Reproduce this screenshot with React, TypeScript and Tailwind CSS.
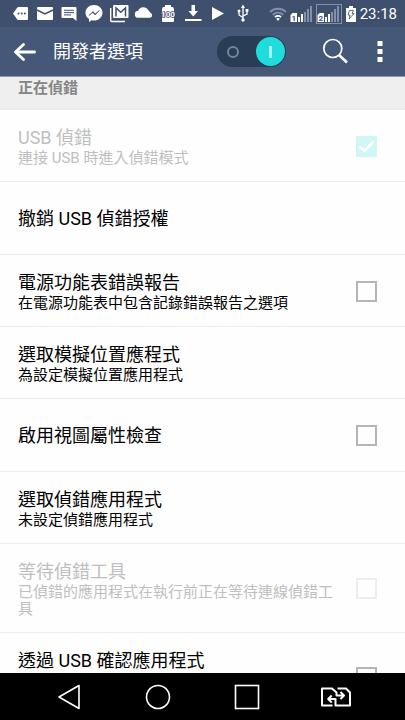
import { useState } from 'react';
import type { ReactNode } from 'react';
import { clsx } from 'clsx';

type Option = {
  id: string;
  title: string;
  summary?: string;
  checkbox?: boolean;
  checked?: boolean;
  disabled?: boolean;
  tall?: boolean;
};

const OPTIONS: Option[] = [
  {
    id: 'usb-debugging',
    title: 'USB 偵錯',
    summary: '連接 USB 時進入偵錯模式',
    checkbox: true,
    checked: true,
    disabled: true
  },
  { id: 'revoke-usb', title: '撤銷 USB 偵錯授權' },
  {
    id: 'bug-report',
    title: '電源功能表錯誤報告',
    summary: '在電源功能表中包含記錄錯誤報告之選項',
    checkbox: true
  },
  { id: 'mock-location', title: '選取模擬位置應程式', summary: '為設定模擬位置應用程式' },
  { id: 'view-attributes', title: '啟用視圖屬性檢查', checkbox: true },
  { id: 'debug-app', title: '選取偵錯應用程式', summary: '未設定偵錯應用程式' },
  {
    id: 'wait-debugger',
    title: '等待偵錯工具',
    summary: '已偵錯的應用程式在執行前正在等待連線偵錯工具',
    checkbox: true,
    disabled: true
  },
  { id: 'verify-usb', title: '透過 USB 確認應用程式', checkbox: true, tall: true }
];

const NotificationIcon = ({ children }: { children: ReactNode }) => (
  <svg viewBox="0 0 20 20" className="size-5 shrink-0 fill-white" aria-hidden="true">
    {children}
  </svg>
);

const SignalBars = () => (
  <>
    <rect x="8" y="12" width="2" height="5" fill="#fff" />
    <rect x="11" y="9" width="2" height="8" fill="#fff" />
    <rect x="14" y="7" width="2" height="10" fill="#8290a8" />
    <rect x="17" y="4" width="2" height="13" fill="#8290a8" />
    <rect x="20" y="1" width="2" height="16" fill="#8290a8" />
  </>
);

const SimCard = ({ slot }: { slot: string }) => (
  <>
    <path d="M.5 10l2-2H7v9H.5z" fill="#fff" />
    <text x="3.800" y="15.500" textAnchor="middle" fontSize="8" fontWeight="700" fill="#3f4f6e">
      {slot}
    </text>
  </>
);

const StatusBar = () => (
  <div className="flex h-[27px] shrink-0 items-center bg-[#3f4f6e] pr-2 pl-[10px] text-white">
    <div className="mr-4 flex flex-1 justify-between">
      <NotificationIcon>
        <path d="M8.500 3H17a1 1 0 011 1v11a1 1 0 01-1 1H8.500a1.500 1.500 0 01-1.200-.6L3 9.500l4.300-5.900A1.500 1.500 0 018.500 3z" />
        <g fill="#3f4f6e">
          <circle cx="8.500" cy="9.500" r="1" />
          <circle cx="11.700" cy="9.500" r="1" />
          <circle cx="14.900" cy="9.500" r="1" />
        </g>
      </NotificationIcon>
      <NotificationIcon>
        <rect x="2" y="3" width="16" height="13" rx="1" />
        <path d="M2 6l8 4 8-4" fill="none" stroke="#3f4f6e" strokeWidth="1.500" />
      </NotificationIcon>
      <NotificationIcon>
        <path d="M3.500 3h13a1 1 0 011 1v13l-3.500-3H3.500a1 1 0 01-1-1V4a1 1 0 011-1z" />
        <path d="M5 6.300h10M5 8.600h10M5 10.900h7" stroke="#3f4f6e" strokeWidth="1" />
      </NotificationIcon>
      <NotificationIcon>
        <path d="M10 1c4.800 0 8.500 3.500 8.500 7.800s-3.700 7.800-8.500 7.800c-.9 0-1.700-.1-2.500-.4L5 18v-3C2.800 13.500 1.500 11.300 1.500 8.800 1.500 4.500 5.200 1 10 1z" />
        <path d="M5 11.500l4-4 2.400 2.400L15.200 6.500l-4 4.500-2.400-2.400z" fill="#3f4f6e" stroke="#3f4f6e" strokeWidth=".6" />
      </NotificationIcon>
      <NotificationIcon>
        <path d="M1.700 4v12.500a1 1 0 001 1H16" fill="none" stroke="#fff" strokeWidth="1.400" />
        <rect x="4" y="1" width="15.500" height="13" rx="1" />
        <path d="M7 12.500V4l4.800 4.300L16.500 4v8.500" fill="none" stroke="#3f4f6e" strokeWidth="1.500" />
      </NotificationIcon>
      <NotificationIcon>
        <path d="M4.500 13.800a3.500 3.500 0 01-.3-7 5.500 5.500 0 0110-.6 3.200 3.200 0 011.800 2.200 2.800 2.800 0 01.2 5.400z" />
      </NotificationIcon>
      <NotificationIcon>
        <path d="M7 1h6v2h2l1 2v12a1 1 0 01-1 1H5a1 1 0 01-1-1V5l1-2h2z" />
        <text x="10" y="13" textAnchor="middle" fontSize="8" fontWeight="700" fill="#fff" stroke="#3f4f6e" strokeWidth="1.600" paintOrder="stroke">
          100
        </text>
      </NotificationIcon>
      <NotificationIcon>
        <path d="M8.500 1h3.500v6h3l-4.750 5.500L5.500 7h3zM2 15h16.500v2H2z" />
      </NotificationIcon>
      <NotificationIcon>
        <path d="M4 3l12 6.500L4 16z" />
      </NotificationIcon>
      <NotificationIcon>
        <path d="M10 16V3M10 13.500L6 11V7M10 12l4-2V7" fill="none" stroke="#fff" strokeWidth="1.300" />
        <path d="M10 .5l2 3.500H8zM12.600 5h2.800v2.800h-2.800z" />
        <circle cx="6" cy="7" r="1.500" />
        <circle cx="10" cy="16" r="1.700" />
      </NotificationIcon>
    </div>

    <div className="flex items-center gap-[3px]">
      <svg viewBox="0 0 18 18" className="size-[18px]" fill="none" strokeWidth="1.800" aria-hidden="true">
        <path d="M1 7a11.500 11.500 0 0116 0M3.700 9.800a7.500 7.500 0 0110.600 0" stroke="#8290a8" />
        <path d="M6 12.200a4.400 4.400 0 016 0" stroke="#fff" />
        <path d="M7.200 13.800a2.800 2.800 0 013.600 0L9 16z" fill="#fff" />
      </svg>
      <svg viewBox="0 0 23 18" className="h-[18px] w-[23px]" aria-hidden="true">
        <SimCard slot="1" />
        <SignalBars />
      </svg>
      <svg viewBox="0 0 26 20" className="h-5 w-[26px]" aria-hidden="true">
        <rect x=".5" y=".5" width="25" height="19" fill="none" stroke="#8290a8" />
        <g transform="translate(1 1)">
          <SimCard slot="2" />
          <SignalBars />
        </g>
      </svg>
      <svg viewBox="0 0 12 18" className="h-[18px] w-3" aria-hidden="true">
        <path d="M4 1h4v2h3v14H1V3h3z" fill="#fff" />
        <path d="M4.500 5.500h4L7 8.500h2L4 14l1-4H3z" fill="none" stroke="#3f4f6e" strokeWidth=".8" />
      </svg>
      <span className="text-[15px] leading-5">23:18</span>
    </div>
  </div>
);

const AppBar = () => {
  const [enabled, setEnabled] = useState(true);

  return (
    <header className="flex h-[50px] shrink-0 items-center border-b border-[#8e99ad] bg-[#465878] pl-3 text-white">
      <button type="button" aria-label="返回" className="mr-4">
        <svg viewBox="0 0 25 20" className="h-5 w-[25px]" fill="none" stroke="#fff" strokeWidth="2.800" strokeLinecap="round" strokeLinejoin="round">
          <path d="M11.500 2.500L3.500 10l8 7.500M3.500 10H22.500" />
        </svg>
      </button>
      <h1 className="flex-1 text-lg leading-6">開發者選項</h1>

      <label className="relative flex h-[31px] w-[69px] items-center rounded-full bg-[#293d54] p-px">
        <input
          type="checkbox"
          role="switch"
          aria-label="開發者選項"
          checked={enabled}
          onChange={(e) => setEnabled(e.target.checked)}
          className="absolute inset-0 size-full appearance-none rounded-full"
        />
        <span className={clsx('flex w-full items-center justify-between', !enabled && 'flex-row-reverse')}>
          <span className="mx-[9px] size-3 rounded-full border-2 border-[#75869a]" />
          <span className="flex size-[29px] items-center justify-center rounded-full bg-[#20dcdc]">
            <span className="h-3 w-[3px] bg-[#a8f3f3]" />
          </span>
        </span>
      </label>

      <button type="button" aria-label="搜尋" className="ml-9">
        <svg viewBox="0 0 27 27" className="size-[27px]" fill="none" stroke="#fff">
          <circle cx="10.800" cy="10.500" r="9" strokeWidth="1.700" />
          <path d="M17 17l8 7.500" strokeWidth="2.600" />
        </svg>
      </button>
      <button type="button" aria-label="更多選項" className="mr-[14px] ml-5 px-1">
        <svg viewBox="0 0 14 22" className="h-[22px] w-[14px]" fill="#fff">
          <path d="M4.500 0h5v5h-5zM4.500 8h5v5h-5zM4.500 16h5v5h-5z" />
        </svg>
      </button>
    </header>
  );
};

const OptionText = ({ option }: { option: Option }) => (
  <span className={clsx('block flex-1', option.tall && 'self-start')}>
    <span className="block text-lg leading-[25px]">{option.title}</span>
    {option.summary && <span className="block text-[15px] leading-[17px]">{option.summary}</span>}
  </span>
);

const OptionRow = ({ option }: { option: Option }) => {
  const rowClass = clsx(
    'flex w-full items-center border-t border-[#ececec] pt-[15px] pr-7 pb-[14px] pl-[18px] text-left',
    option.tall ? 'min-h-[89px]' : !option.summary && 'min-h-[73px]',
    option.disabled ? 'text-[#bfbfbf]' : 'text-black'
  );

  if (!option.checkbox) {
    return (
      <button type="button" className={rowClass}>
        <OptionText option={option} />
      </button>
    );
  }

  return (
    <label htmlFor={option.id} className={rowClass}>
      <OptionText option={option} />
      <span className="relative ml-4 size-[21px] shrink-0">
        <input
          id={option.id}
          type="checkbox"
          defaultChecked={option.checked}
          disabled={option.disabled}
          className="peer block size-full appearance-none border-2 border-[#b5b5b5] checked:border-[#20dcdc] checked:bg-[#20dcdc] disabled:border-[#ededed] disabled:checked:border-[#d0f6f6] disabled:checked:bg-[#d0f6f6]"
        />
        <svg viewBox="0 0 21 21" className="pointer-events-none absolute inset-0 hidden size-full peer-checked:block" fill="none" stroke="#fff" strokeWidth="2.600">
          <path d="M3.500 10.500l5 4.500L17.500 5.500" />
        </svg>
      </span>
    </label>
  );
};

const NavigationBar = () => (
  <nav className="flex h-[47px] shrink-0 items-center bg-black px-6">
    <button type="button" aria-label="返回" className="flex flex-1 justify-center">
      <svg viewBox="0 0 26 26" className="size-[26px]" fill="none" stroke="#fff" strokeWidth="1.600" strokeLinejoin="round">
        <path d="M23 1.500v23L3 13z" />
      </svg>
    </button>
    <button type="button" aria-label="主畫面" className="flex flex-1 justify-center">
      <svg viewBox="0 0 26 26" className="size-[26px]" fill="none" stroke="#fff" strokeWidth="1.600">
        <circle cx="13" cy="13" r="11.500" />
      </svg>
    </button>
    <button type="button" aria-label="最近使用" className="flex flex-1 justify-center">
      <svg viewBox="0 0 26 26" className="size-[26px]" fill="none" stroke="#fff" strokeWidth="1.600">
        <rect x="1.500" y="1.500" width="23" height="23" />
      </svg>
    </button>
    <button type="button" aria-label="切換 SIM 卡" className="flex flex-1 justify-center">
      <svg viewBox="0 0 32 22" className="h-[22px] w-8" fill="none" stroke="#fff" strokeWidth="2" strokeLinejoin="round">
        <path d="M12.500 19.500H2V2.500h10l4.500 4v3h7M20.500 6l3.500 3.500-3.500 3.500" />
        <path d="M17.500 2.500H26l4 4v13H15.500V13H9M11.700 9.500L8.200 13l3.500 3.500" />
      </svg>
    </button>
  </nav>
);

const App = () => (
  <div className="flex h-screen flex-col overflow-hidden bg-[#fefefe] font-[Roboto,'Noto_Sans_CJK_TC',sans-serif]" lang="zh-Hant">
    <StatusBar />
    <AppBar />
    <main className="min-h-0 flex-1 overflow-hidden">
      <h2 className="bg-[#efefef] pb-[10px] pl-[18px] text-[15px] leading-[22px] font-bold text-[#858585]">正在偵錯</h2>
      {OPTIONS.map((option) => (
        <OptionRow key={option.id} option={option} />
      ))}
    </main>
    <NavigationBar />
  </div>
);

export default App;
